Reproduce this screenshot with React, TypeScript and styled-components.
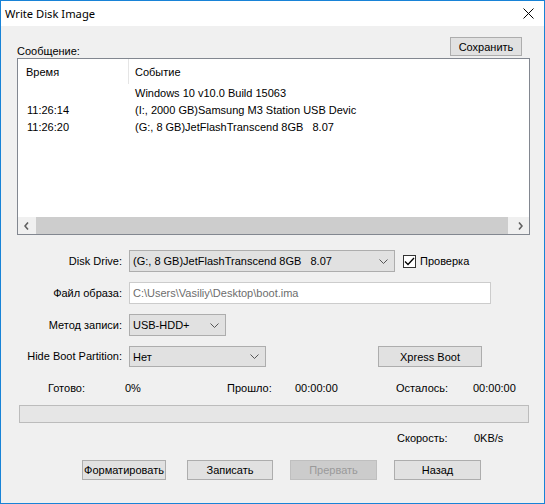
import React from "react";
import styled, { createGlobalStyle } from "styled-components";

const Global = createGlobalStyle`
  html, body { margin: 0; padding: 0; width: 545px; height: 504px; overflow: hidden; background: #fff; }
  * { box-sizing: border-box; }
`;

const Window = styled.div`
  width: 545px;
  height: 504px;
  border: 1px solid #1883d7;
  display: flex;
  flex-direction: column;
  font-family: "Liberation Sans", Arial, sans-serif;
  font-size: 11px;
  color: #000;
`;

const TitleBar = styled.div`
  height: 25px;
  flex: none;
  background: #fff;
  display: flex;
  align-items: center;
  justify-content: space-between;
  padding: 0 10px 0 4px;
`;

const Title = styled.span`
  font-family: "Noto Sans", "Open Sans", sans-serif;
  font-size: 11.2px;
  color: #000;
`;

const Body = styled.div`
  flex: 1;
  background: #f0f0f0;
  padding: 11px 0 0 16px;
  display: flex;
  flex-direction: column;
`;

const TopBar = styled.div`
  width: 505px;
  height: 21px;
  display: flex;
  justify-content: space-between;
  align-items: flex-start;
`;

const Text = styled.span<{ $end?: boolean }>`
  line-height: 13px;
  white-space: pre;
  align-self: ${(p) => (p.$end ? "flex-end" : "auto")};
`;

const Button = styled.button<{ $w: number; $h?: number }>`
  width: ${(p) => p.$w}px;
  height: ${(p) => p.$h ?? 19}px;
  padding: 0;
  margin: 0;
  border: 1px solid #adadad;
  background: #e1e1e1;
  font-family: "Liberation Sans", Arial, sans-serif;
  font-size: 11px;
  color: #000;
  white-space: nowrap;
  &:disabled {
    background: #cccccc;
    border-color: #bfbfbf;
    color: #9a9a9a;
  }
`;

const ListBox = styled.div`
  width: 513px;
  height: 177px;
  border: 1px solid #828790;
  background: #fff;
  display: flex;
  flex-direction: column;
`;

const HeaderRow = styled.div`
  height: 25px;
  flex: none;
  display: flex;
  align-items: stretch;
`;

const HeaderCell = styled.div<{ $w?: number; $sep?: boolean }>`
  width: ${(p) => (p.$w ? `${p.$w}px` : "auto")};
  flex: ${(p) => (p.$w ? "none" : "1")};
  display: flex;
  align-items: center;
  padding-left: ${(p) => (p.$sep ? 8 : 6)}px;
  border-right: ${(p) => (p.$sep ? "1px solid #e5e5e5" : "none")};
`;

const DataRow = styled.div`
  height: 17px;
  flex: none;
  display: flex;
  align-items: center;
`;

const DataCell = styled.div<{ $w?: number; $pl: number }>`
  width: ${(p) => (p.$w ? `${p.$w}px` : "auto")};
  flex: ${(p) => (p.$w ? "none" : "1")};
  padding-left: ${(p) => p.$pl}px;
  white-space: pre;
  overflow: hidden;
`;

const Filler = styled.div`
  flex: 1;
`;

const HScroll = styled.div`
  height: 17px;
  flex: none;
  display: flex;
  background: #f0f0f0;
`;

const ScrollArrow = styled.div`
  width: 17px;
  flex: none;
  display: flex;
  align-items: center;
  justify-content: center;
`;

const Thumb = styled.div<{ $ml: number; $mr: number }>`
  flex: 1;
  background: #cdcdcd;
  margin-left: ${(p) => p.$ml}px;
  margin-right: ${(p) => p.$mr}px;
`;

const FormGrid = styled.div`
  margin-top: 15px;
  display: grid;
  grid-template-columns: 105px auto;
  column-gap: 7px;
  row-gap: 10px;
  align-items: center;
`;

const Label = styled.span`
  text-align: right;
  line-height: 13px;
  white-space: nowrap;
`;

const Controls = styled.div<{ $gap?: number }>`
  display: flex;
  align-items: center;
  gap: ${(p) => p.$gap ?? 0}px;
`;

const Combo = styled.div<{ $w: number; $h?: number }>`
  width: ${(p) => p.$w}px;
  height: ${(p) => p.$h ?? 22}px;
  border: 1px solid #adadad;
  background: #e1e1e1;
  display: flex;
  align-items: center;
  justify-content: space-between;
  padding: 0 6px 0 3px;
  white-space: pre;
`;

const TextField = styled.div`
  width: 362px;
  height: 22px;
  border: 1px solid #cccccc;
  background: #fff;
  color: #6d6d6d;
  display: flex;
  align-items: center;
  padding-left: 3px;
`;

const CheckLabel = styled.label`
  display: flex;
  align-items: center;
  gap: 4px;
`;

const CheckBox = styled.span`
  width: 13px;
  height: 13px;
  border: 1px solid #333;
  background: #fff;
  display: flex;
  align-items: center;
  justify-content: center;
`;

const StatsRow = styled.div<{ $cols: string; $ml: number; $mt: number }>`
  margin-top: ${(p) => p.$mt}px;
  margin-left: ${(p) => p.$ml}px;
  display: grid;
  grid-template-columns: ${(p) => p.$cols};
  line-height: 13px;
`;

const Progress = styled.div`
  margin-top: 10px;
  margin-left: 2px;
  width: 510px;
  height: 18px;
  border: 1px solid #bcbcbc;
  background: #e6e6e6;
`;

const ButtonRow = styled.div`
  margin-top: 15px;
  margin-left: 65px;
  display: grid;
  grid-template-columns: 105px 103px 104px auto;
`;

const Chevron = () => (
  <svg width="9" height="5" viewBox="0 0 9 5">
    <path d="M0.5 0.5 L4.5 4.5 L8.5 0.5" fill="none" stroke="#555" strokeWidth="1" />
  </svg>
);

const Arrow = ({ dir }: { dir: "l" | "r" }) => (
  <svg width="5" height="8" viewBox="0 0 5 8">
    <path
      d={dir === "l" ? "M4 0.5 L1 4 L4 7.5" : "M1 0.5 L4 4 L1 7.5"}
      fill="none"
      stroke="#606060"
      strokeWidth="1.6"
    />
  </svg>
);

const rows: [string, string][] = [
  ["", "Windows 10 v10.0 Build 15063"],
  ["11:26:14", "(I:, 2000 GB)Samsung M3 Station USB Devic"],
  ["11:26:20", "(G:, 8 GB)JetFlashTranscend 8GB   8.07"],
];

export default function App() {
  return (
    <>
      <Global />
      <Window>
        <TitleBar>
          <Title>Write Disk Image</Title>
          <svg width="11" height="11" viewBox="0 0 11 11">
            <path d="M0.5 0.5 L10.5 10.5 M10.5 0.5 L0.5 10.5" stroke="#000" strokeWidth="1" />
          </svg>
        </TitleBar>
        <Body>
          <TopBar>
            <Text $end>Сообщение:</Text>
            <Button $w={72}>Сохранить</Button>
          </TopBar>
          <ListBox>
            <HeaderRow>
              <HeaderCell $w={111} $sep>
                Время
              </HeaderCell>
              <HeaderCell>Событие</HeaderCell>
            </HeaderRow>
            {rows.map(([t, e], i) => (
              <DataRow key={i}>
                <DataCell $w={111} $pl={9}>
                  {t}
                </DataCell>
                <DataCell $pl={6}>{e}</DataCell>
              </DataRow>
            ))}
            <Filler />
            <HScroll>
              <ScrollArrow>
                <Arrow dir="l" />
              </ScrollArrow>
              <Thumb $ml={1} $mr={4} />
              <ScrollArrow>
                <Arrow dir="r" />
              </ScrollArrow>
            </HScroll>
          </ListBox>
          <FormGrid>
            <Label>Disk Drive:</Label>
            <Controls $gap={8}>
              <Combo $w={266}>
                <span>(G:, 8 GB)JetFlashTranscend 8GB   8.07</span>
                <Chevron />
              </Combo>
              <CheckLabel>
                <CheckBox>
                  <svg width="11" height="9" viewBox="0 0 11 9">
                    <path d="M1 4.5 L4 7.5 L10 1" fill="none" stroke="#000" strokeWidth="1.3" />
                  </svg>
                </CheckBox>
                Проверка
              </CheckLabel>
            </Controls>
            <Label>Файл образа:</Label>
            <Controls>
              <TextField>C:\Users\Vasiliy\Desktop\boot.ima</TextField>
            </Controls>
            <Label>Метод записи:</Label>
            <Controls>
              <Combo $w={97}>
                <span>USB-HDD+</span>
                <Chevron />
              </Combo>
            </Controls>
            <Label>Hide Boot Partition:</Label>
            <Controls $gap={112}>
              <Combo $w={137} $h={21}>
                <span>Нет</span>
                <Chevron />
              </Combo>
              <Button $w={104} $h={21}>
                Xpress Boot
              </Button>
            </Controls>
          </FormGrid>
          <StatsRow $mt={15} $ml={31} $cols="77px 102px 68px 101px 77px auto">
            <Text>Готово:</Text>
            <Text>0%</Text>
            <Text>Прошло:</Text>
            <Text>00:00:00</Text>
            <Text>Осталось:</Text>
            <Text>00:00:00</Text>
          </StatsRow>
          <Progress />
          <StatsRow $mt={9} $ml={380} $cols="77px auto">
            <Text>Скорость:</Text>
            <Text>0KB/s</Text>
          </StatsRow>
          <ButtonRow>
            <Button $w={84} $h={20}>Форматировать</Button>
            <Button $w={86} $h={20}>Записать</Button>
            <Button $w={87} $h={20} disabled>
              Прервать
            </Button>
            <Button $w={87} $h={20}>Назад</Button>
          </ButtonRow>
        </Body>
      </Window>
    </>
  );
}
